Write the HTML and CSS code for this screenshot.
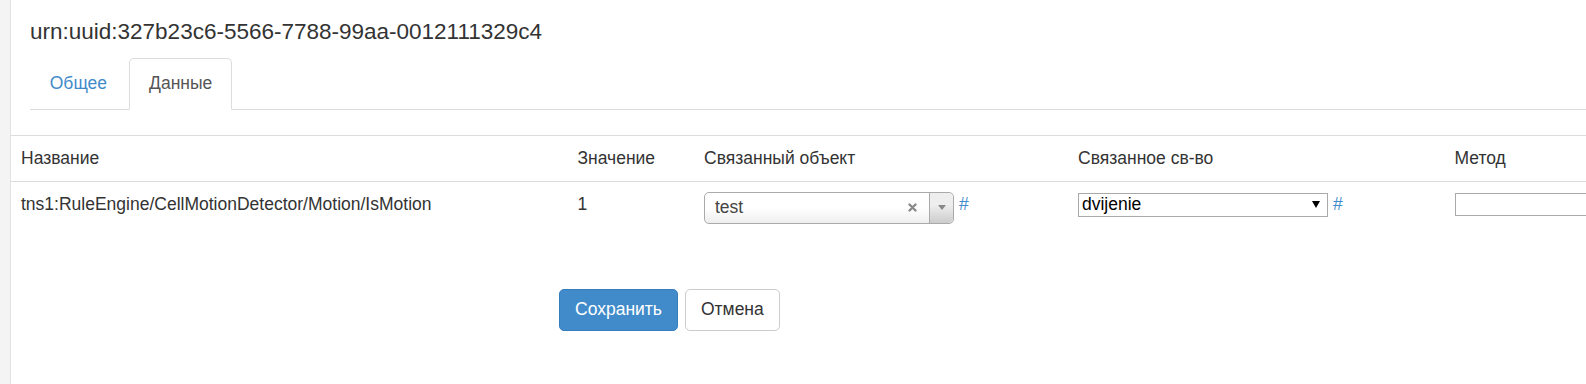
FILE: index.html
```html
<!DOCTYPE html>
<html lang="ru">
<head>
  <meta charset="UTF-8" />
  <meta name="viewport" content="width=device-width, initial-scale=1.0"/>
  <title>urn:uuid:327b23c6-5566-7788-99aa-0012111329c4</title>
  <link rel="stylesheet" href="styles.css">
</head>
<body>
  <div class="page">
    <div class="sidebar"></div>

    <div class="main">
      <div class="head">
        <h4 class="title">urn:uuid:327b23c6-5566-7788-99aa-0012111329c4</h4>
        <ul class="tabs">
          <li><a href="#">Общее</a></li>
          <li class="active"><a href="#">Данные</a></li>
        </ul>
      </div>

      <table class="data">
        <colgroup>
          <col class="c-name">
          <col class="c-value">
          <col class="c-object">
          <col class="c-prop">
          <col class="c-method">
        </colgroup>
        <thead>
          <tr>
            <th>Название</th>
            <th>Значение</th>
            <th>Связанный объект</th>
            <th>Связанное св-во</th>
            <th>Метод</th>
          </tr>
        </thead>
        <tbody>
          <tr>
            <td>tns1:RuleEngine/CellMotionDetector/Motion/IsMotion</td>
            <td>1</td>
            <td>
              <div class="s2">
                <span class="s2-text">test</span>
                <span class="s2-clear">
                  <svg width="9" height="9" viewBox="0 0 9 9"><path d="M1.5 1.5l6 6M7.5 1.5l-6 6" stroke="#8a8a8a" stroke-width="2.4" stroke-linecap="round"/></svg>
                </span>
                <span class="s2-arrow"><b></b></span>
              </div>
              <a class="hash" href="#">#</a>
            </td>
            <td>
              <div class="native-select">
                <span>dvijenie</span>
                <b></b>
              </div>
              <a class="hash" href="#">#</a>
            </td>
            <td><input type="text" class="method"></td>
          </tr>
        </tbody>
      </table>

      <div class="actions">
        <button class="btn btn-primary">Сохранить</button>
        <button class="btn btn-default">Отмена</button>
      </div>
    </div>
  </div>
</body>
</html>
```

FILE: styles.css
```css
body {
  margin: 0;
  font-family: "Liberation Sans", Arial, sans-serif;
  font-size: 17.5px;
  line-height: 25px;
  color: #333;
  background: #fff;
  overflow: hidden;
}
.page {
  display: flex;
  min-height: 100vh;
}
.sidebar {
  width: 10px;
  flex: none;
  background: #f4f4f4;
  border-right: 1px solid #e2e2e2;
}
.main {
  flex: 1;
  min-width: 0;
  overflow: hidden;
}
.head {
  padding: 19.5px 0 0 19px;
}
.title {
  margin: 0 0 13.5px;
  font-size: 22.5px;
  font-weight: normal;
  line-height: 1.1;
}
.tabs {
  display: flex;
  margin: 0;
  padding: 0;
  list-style: none;
  border-bottom: 1px solid #ddd;
}
.tabs li {
  margin-bottom: -1px;
}
.tabs a {
  display: block;
  padding: 12.5px 18.75px;
  margin-right: 2.5px;
  line-height: 25px;
  color: #428bca;
  text-decoration: none;
  border: 1px solid transparent;
  border-radius: 5px 5px 0 0;
}
.tabs .active a {
  color: #555;
  background: #fff;
  border-color: #ddd #ddd transparent;
}

.data {
  margin-top: 25px;
  width: 1700px;
  border-collapse: collapse;
  table-layout: fixed;
  border-top: 1px solid #ddd;
}
.c-name { width: 556.5px; }
.c-value { width: 126.5px; }
.c-object { width: 374px; }
.c-prop { width: 376.5px; }
.data th,
.data td {
  padding: 10px;
  text-align: left;
  vertical-align: top;
  line-height: 25px;
  white-space: nowrap;
}
.data th {
  font-weight: normal;
  border-bottom: 1px solid #ddd;
}

.s2 {
  display: inline-flex;
  align-items: center;
  vertical-align: top;
  box-sizing: border-box;
  width: 250px;
  height: 32px;
  padding-left: 10px;
  border: 1px solid #aaa;
  border-radius: 5px;
  background: linear-gradient(to top, #eee 0%, #fff 50%);
  color: #444;
}
.s2-text {
  flex: 1;
}
.s2-clear {
  display: flex;
  margin-right: 12px;
}
.s2-arrow {
  display: flex;
  align-items: center;
  justify-content: center;
  align-self: stretch;
  width: 23px;
  border-left: 1px solid #aaa;
  border-radius: 0 5px 5px 0;
  background: linear-gradient(to top, #ccc 0%, #eee 60%);
}
.s2-arrow b {
  width: 0;
  height: 0;
  border-left: 4px solid transparent;
  border-right: 4px solid transparent;
  border-top: 5px solid #888;
}
.hash {
  color: #428bca;
  text-decoration: none;
}

.native-select {
  display: inline-flex;
  align-items: center;
  vertical-align: top;
  box-sizing: border-box;
  width: 250px;
  height: 24px;
  margin-top: 1px;
  padding: 0 7px 0 3px;
  border: 1px solid #a9a9a9;
  color: #000;
}
.native-select span {
  flex: 1;
}
.native-select b {
  width: 0;
  height: 0;
  border-left: 4px solid transparent;
  border-right: 4px solid transparent;
  border-top: 7px solid #000;
}

.method {
  box-sizing: border-box;
  width: 190px;
  height: 23px;
  margin: 1px 0 0;
  padding: 0 3px;
  border: 1px solid #a9a9a9;
  font: inherit;
  vertical-align: top;
}

.actions {
  display: flex;
  gap: 7px;
  margin-top: 55px;
  padding-left: 548px;
}
.btn {
  padding: 7.5px 15px;
  font-family: inherit;
  font-size: 17.5px;
  line-height: 25px;
  border: 1px solid transparent;
  border-radius: 5px;
  cursor: pointer;
}
.btn-primary {
  background: #428bca;
  border-color: #357ebd;
  color: #fff;
}
.btn-default {
  background: #fff;
  border-color: #ccc;
  color: #333;
}
```
